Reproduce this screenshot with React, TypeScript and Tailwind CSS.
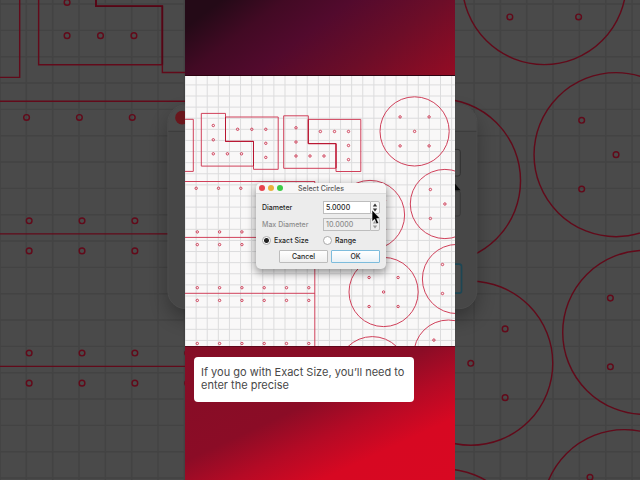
import React, { useState } from "react";

type Point = [number, number];

const GRID_STEP = 11.11;

const circles: Point[] = [
  [414.6, 131.4],
  [444.9, 204],
  [370, 215],
  [383.6, 292],
  [457, 279],
  [448.4, 354.6],
  [372.3, 371.2],
];

const plates = [
  "M185 119.3H193.3V171.4H185",
  "M201.3 113.4H225.5V141.4H253.5V166.1H201.3Z",
  "M225.5 117H278.2V169.3H253.5V141.4H225.5Z",
  "M283.7 115.8H308.3V143.6H336V168.3H283.7Z",
  "M308.3 119.4H360.8V171.5H336V143.6H308.3Z",
];

const plateHoles: Point[] = [
  [213.3, 125.5], [213.3, 139.8], [213.3, 153.8], [227.4, 153.8], [241.5, 153.8],
  [237.6, 129.3], [251.8, 129.3], [265.8, 129.3], [265.8, 143.3], [265.8, 157.4],
  [296, 127.8], [296, 142], [296, 156], [310, 156], [324, 156],
  [320.4, 131.5], [334.5, 131.5], [348.5, 131.5], [348.5, 145.5], [348.5, 159.6],
];

const rowHoles: Point[] = [188.3, 231.9, 244.6, 287.7, 300.4, 343.5].flatMap((y, row) =>
  [0, 1, 2, 3, 4, 5].map((i): Point => [(row === 0 ? 196.2 : 197.3) + i * 22.3, y]),
);

const circleHoles: Point[] = circles.flatMap(([x, y]): Point[] => [
  [x, y],
  [x - 14.5, y - 14.5],
  [x + 14.5, y - 14.5],
  [x - 14.5, y + 14.5],
  [x + 14.5, y + 14.5],
]);

const holes = [...plateHoles, ...rowHoles, ...circleHoles];

type DrawingProps = { grid: string; line: string; joint: string; width: number };

function Drawing({ grid, line, joint, width }: DrawingProps) {
  return (
    <g fill="none">
      <g stroke={grid} strokeWidth={width}>
        {Array.from({ length: 25 }, (_, i) => (
          <line key={`v${i}`} x1={185 + i * GRID_STEP} x2={185 + i * GRID_STEP} y1={76} y2={346} />
        ))}
        {Array.from({ length: 25 }, (_, i) => (
          <line key={`h${i}`} x1={185} x2={455} y1={84.9 + i * GRID_STEP} y2={84.9 + i * GRID_STEP} />
        ))}
      </g>
      <g stroke={line} strokeWidth={width}>
        {plates.map((d) => (
          <path key={d} d={d} />
        ))}
        <path d="M225.5 117V141.4H253.5V166M308.3 119.4V143.6H336V168" stroke={joint} />
        <path d="M185 181.5H315M185 237.4H315M185 293.3H315M314.8 181.5V346" />
        {circles.map(([x, y]) => (
          <circle key={`${x}-${y}`} cx={x} cy={y} r={34.6} />
        ))}
        {holes.map(([x, y]) => (
          <circle key={`${x}-${y}`} cx={x} cy={y} r={1.2} />
        ))}
      </g>
    </g>
  );
}

function Backdrop() {
  return (
    <svg
      className="absolute inset-0 h-full w-full bg-[#4a4a4a]"
      viewBox="185 138.75 270 202.5"
      preserveAspectRatio="xMidYMid slice"
      aria-hidden="true"
    >
      <defs>
        <filter id="soft" x="-20%" y="-20%" width="140%" height="140%">
          <feGaussianBlur stdDeviation="4" />
        </filter>
      </defs>
      <Drawing grid="#434343" line="#620a1a" joint="#540515" width={0.6} />
      <rect x="256" y="187" width="130" height="86" rx="8" fill="#000" opacity="0.3" filter="url(#soft)" />
      <rect x="255.8" y="183" width="130.4" height="86" rx="7.5" fill="#474747" stroke="#505050" strokeWidth="0.3" />
      <path d="M256 193.9V190.5A7.3 7.3 0 0 1 263.3 183.2H378.8A7.3 7.3 0 0 1 386 190.5V193.9Z" fill="#4b4b4b" />
      <path d="M256 194.2H386" stroke="#3c3c3c" strokeWidth="0.4" />
      <circle cx="261.8" cy="188.4" r="2.9" fill="#6a161c" />
      <rect x="370" y="201.8" width="9.2" height="11.2" rx="1" fill="#4d4d4d" stroke="#303030" strokeWidth="0.4" />
      <rect x="370" y="219.3" width="9.2" height="10.6" rx="1" fill="#474747" stroke="#373737" strokeWidth="0.4" />
      <path d="M375 214 379.3 219H375Z" fill="#080808" />
      <rect x="331" y="250.2" width="48.7" height="12.2" rx="1" fill="#4b4b4b" stroke="#1d4654" strokeWidth="0.7" />
    </svg>
  );
}

function Stepper({ disabled }: { disabled?: boolean }) {
  return (
    <button
      type="button"
      aria-label="Change value"
      disabled={disabled}
      className="grid w-[10px] place-items-center rounded-r-[2px] border border-[#bdbdbd] bg-[#f8f8f8] text-[#333] disabled:bg-[#eeeeee] disabled:text-[#999]"
    >
      <svg viewBox="0 0 6 9" className="h-[9px] w-[6px]" fill="currentColor" aria-hidden="true">
        <path d="M3 0.6 5.2 3.4H0.8ZM3 8.4 5.2 5.6H0.8Z" />
      </svg>
    </button>
  );
}

type FieldProps = {
  id: string;
  label: string;
  value: string;
  disabled?: boolean;
  onChange: (value: string) => void;
};

function Field({ id, label, value, disabled, onChange }: FieldProps) {
  return (
    <div className="grid h-[13px] grid-cols-[61px_1fr] items-center">
      <label htmlFor={id} className={disabled ? "text-[#8c8c8c]" : "text-[#262626]"}>
        {label}
      </label>
      <div className="flex h-[13px]">
        <input
          id={id}
          type="text"
          value={value}
          disabled={disabled}
          onChange={(e) => onChange(e.target.value)}
          className="w-0 flex-1 border border-r-0 border-[#bdbdbd] bg-white px-[2px] text-[#262626] disabled:bg-[#eeeeee] disabled:text-[#8c8c8c]"
        />
        <Stepper disabled={disabled} />
      </div>
    </div>
  );
}

const radioClass =
  "h-[9px] w-[9px] shrink-0 appearance-none rounded-full border border-[#aaa] bg-white checked:bg-[radial-gradient(circle,#222_0_2px,#fff_3px)]";

function SelectCircles() {
  const [mode, setMode] = useState<"exact" | "range">("exact");
  const [diameter, setDiameter] = useState("5.0000");
  const [maxDiameter, setMaxDiameter] = useState("10.0000");

  return (
    <form
      role="dialog"
      aria-labelledby="dialog-title"
      onSubmit={(e) => e.preventDefault()}
      className="absolute top-[107px] left-[71px] w-[130px] rounded-[5px] bg-[#ececec] font-[Inter,sans-serif] text-[7px] leading-[9px] font-medium shadow-[0_3px_9px_1px_rgba(0,0,0,0.4)]"
    >
      <header className="grid h-[11px] grid-cols-[1fr_auto_1fr] items-center rounded-t-[5px] border-b border-[#dcdcdc] bg-[#f7f6f6] px-[3px]">
        <div className="flex gap-[3px]">
          <span className="h-[6px] w-[6px] rounded-full bg-[#e6434d]" />
          <span className="h-[6px] w-[6px] rounded-full bg-[#e8b13c]" />
          <span className="h-[6px] w-[6px] rounded-full bg-[#3ccb46]" />
        </div>
        <h1 id="dialog-title" className="text-[#555]">
          Select Circles
        </h1>
      </header>
      <div className="flex flex-col px-[6px] pt-[7px] pb-[6px]">
        <Field id="diameter" label="Diameter" value={diameter} onChange={setDiameter} />
        <div className="h-[4px]" />
        <Field
          id="max-diameter"
          label="Max Diameter"
          value={maxDiameter}
          disabled={mode === "exact"}
          onChange={setMaxDiameter}
        />
        <div className="my-[5px] grid grid-cols-[61px_1fr] text-[#262626]">
          <label className="flex items-center gap-[3px]">
            <input
              type="radio"
              name="mode"
              checked={mode === "exact"}
              onChange={() => setMode("exact")}
              className={radioClass}
            />
            Exact Size
          </label>
          <label className="flex items-center gap-[3px]">
            <input
              type="radio"
              name="mode"
              checked={mode === "range"}
              onChange={() => setMode("range")}
              className={radioClass}
            />
            Range
          </label>
        </div>
        <div className="flex justify-end gap-[3px] text-[#262626]">
          <button
            type="button"
            className="h-[13px] w-[49px] rounded-[1px] border border-[#bdbdbd] bg-linear-to-b from-white to-[#efefef]"
          >
            Cancel
          </button>
          <button
            type="submit"
            className="h-[13px] w-[49px] rounded-[1px] border border-[#7dbcdc] bg-linear-to-b from-white to-[#e9f1f6]"
          >
            OK
          </button>
        </div>
      </div>
      <svg
        viewBox="0 0 10 17"
        className="absolute top-[26px] left-[115px] h-[17px] w-[10px]"
        aria-hidden="true"
      >
        <path
          d="M1 1V12.6L3.6 10.3L5.5 15L7.6 14.1L5.7 9.6H9.2Z"
          fill="#000"
          stroke="#fff"
          strokeWidth="0.6"
        />
      </svg>
    </form>
  );
}

export default function App() {
  return (
    <div className="relative min-h-screen overflow-hidden bg-[#4a4a4a]">
      <Backdrop />
      <main className="relative mx-auto flex aspect-[9/16] h-screen flex-col">
        <div className="h-[76px] border-b border-[#2c0210] bg-[linear-gradient(143deg,#240a17_10%,#420a24_27%,#520a2d_45%,#6c0d28_70%,#940c24_100%)]" />
        <section className="relative aspect-square bg-[#f9f8f8]">
          <svg className="h-full w-full" viewBox="185 76 270 270" role="img" aria-label="Plates and circles on a grid">
            <Drawing grid="#dcdcdd" line="#d0405a" joint="#b81430" width={1} />
          </svg>
          <SelectCircles />
        </section>
        <div className="flex-1 border-t border-[#5c061a] bg-[linear-gradient(155deg,#840e26_0%,#8b0c26_44%,#b50a25_60%,#d70822_76%,#d80822_100%)] px-[9px] pt-[10px]">
          <p className="h-[45px] w-[220px] rounded-[4px] bg-white px-[7px] pt-[9px] font-[Inter,sans-serif] text-[11px] leading-[13px] text-[#484848]">
            If you go with Exact Size, you’ll need to enter the precise
          </p>
        </div>
      </main>
    </div>
  );
}
